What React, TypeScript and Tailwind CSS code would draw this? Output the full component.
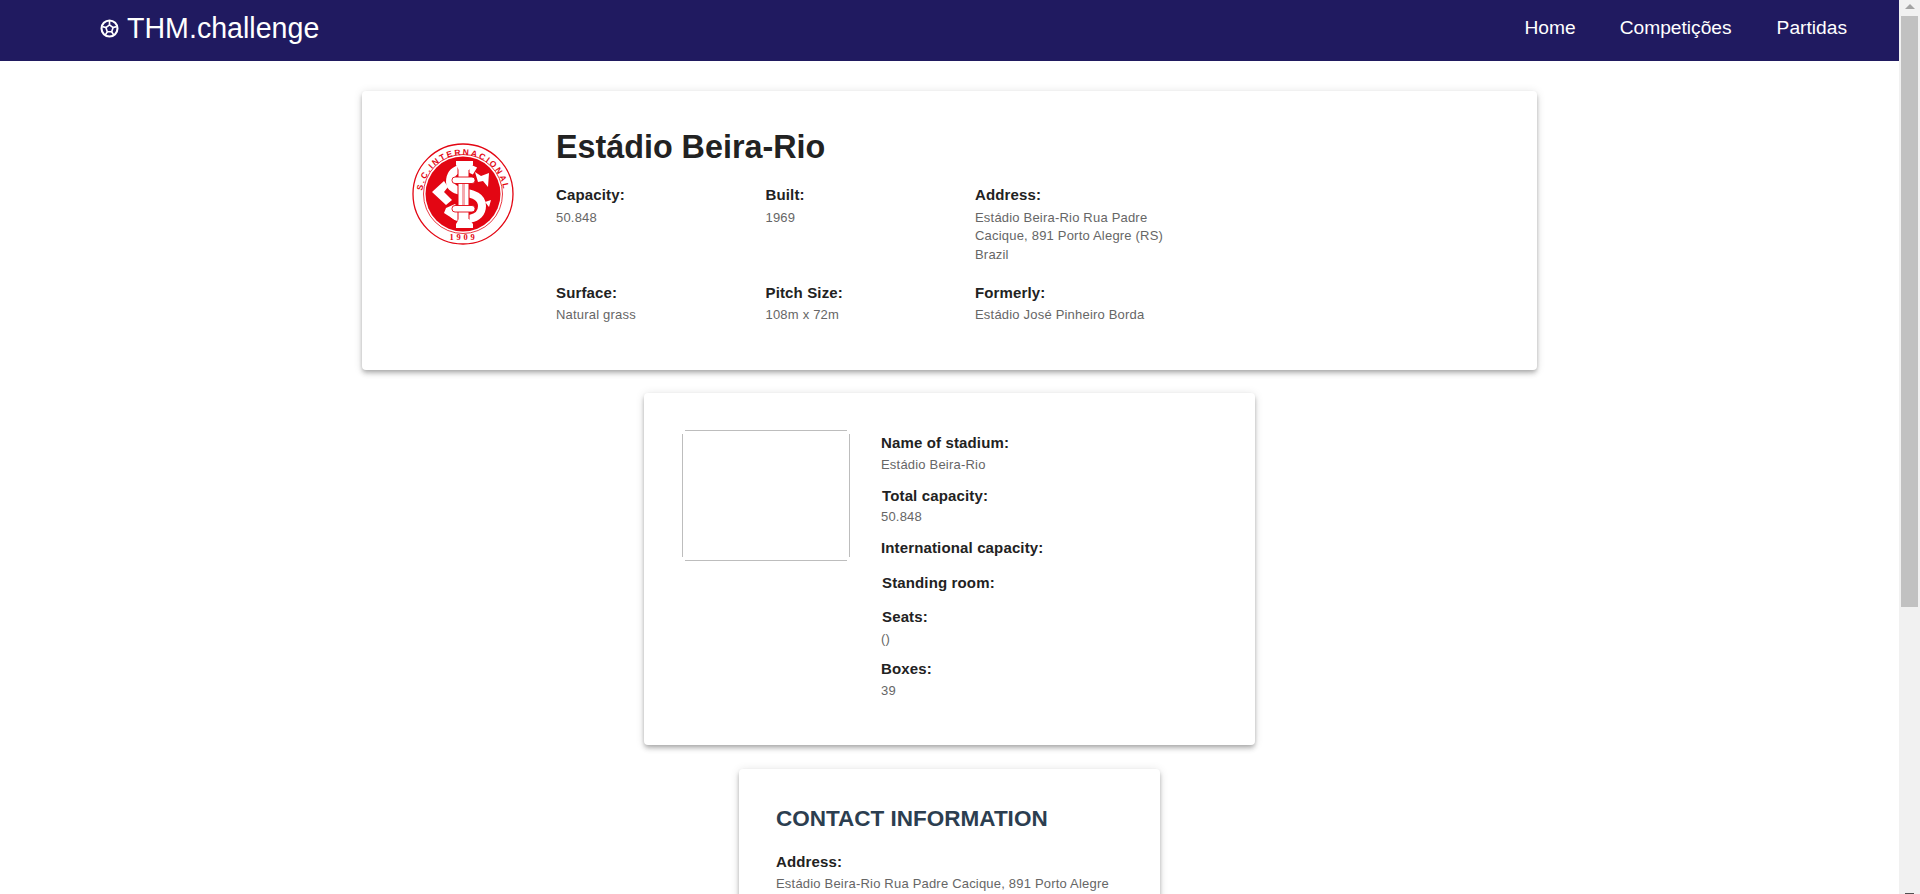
const FONT = "font-['Liberation_Sans',Arial,sans-serif]";

function Ball() {
  return (
    <svg width="19" height="19" viewBox="0 0 20 20" fill="none" stroke="white" strokeWidth="2.2" className="shrink-0">
      <circle cx="10" cy="10" r="8.4" />
      <path d="M10 6.2 L13.8 9 L12.3 13.4 L7.7 13.4 L6.2 9 Z" strokeWidth="1.7" />
      <path d="M10 2v4M2.5 8l3.7 1M17.5 8l-3.7 1M5.5 17l2.2-3.6M14.5 17l-2.2-3.6" strokeWidth="1.7" />
    </svg>
  );
}

function Crest() {
  const s = "M64 29 C56 24 39 25 39 40 C39 54 71 46 71 64 C71 79 50 80 42 72";
  return (
    <svg width="104" height="104" viewBox="0 0 104 104" className="shrink-0">
      <defs>
        <path id="topArc" d="M11 54 A41 41 0 1 1 93 54" />
      </defs>
      <circle cx="52" cy="52" r="50" fill="white" stroke="#e30613" strokeWidth="1.3" />
      <circle cx="52" cy="52" r="39.5" fill="none" stroke="#e30613" strokeWidth="0.8" />
      <circle cx="52" cy="52" r="37.5" fill="#e30613" />
      <text fontFamily="Liberation Sans" fontWeight="700" fontSize="8.4" fill="#e30613" letterSpacing="1.9">
        <textPath href="#topArc" startOffset="50%" textAnchor="middle">S.C.INTERNACIONAL</textPath>
      </text>
      <text x="52.5" y="98" textAnchor="middle" fontFamily="Liberation Serif" fontWeight="700" fontSize="8.5" fill="#e30613" letterSpacing="2.8">1909</text>
      <path d={s} fill="none" stroke="#e30613" strokeWidth="10" />
      <path d={s} fill="none" stroke="white" strokeWidth="8" />
      <path d="M21 50 L33 39 L37 45 L33 50 L41 58 L35 63 Z" fill="white" />
      <path d="M64 30 L70 34 L78 31 L77 45 L72 39 L67 40 Z" fill="white" />
      <path d="M74 60 L80 58 L78 65 Z" fill="white" />
      <path d="M35 66 L44 62 L50 70 L44 78 L33 71 Z" fill="white" />
      <rect x="47" y="24" width="11" height="56" fill="white" stroke="#e30613" strokeWidth="1" />
      <rect x="51" y="40" width="3" height="24" fill="#e30613" opacity="0.35" />
      <path d="M45 19 H62 V23 L58 28 H48 L45 23 Z" fill="white" />
      <path d="M45 86 H62 V82 L58 77 H48 L45 82 Z" fill="white" />
      <rect x="41" y="35" width="23" height="6.5" rx="3" fill="white" stroke="#e30613" strokeWidth="0.9" />
      <rect x="41" y="63.5" width="23" height="6.5" rx="3" fill="white" stroke="#e30613" strokeWidth="0.9" />
    </svg>
  );
}

function Field({
  label,
  value,
  className = "",
  valueClass = "mt-[3px]",
}: {
  label: string;
  value?: string;
  className?: string;
  valueClass?: string;
}) {
  return (
    <div className={className}>
      <div className="text-[15px] leading-[20px] font-bold tracking-[0.14px] text-[#222222]">{label}</div>
      {value ? <div className={`${valueClass} text-[13px] leading-[18.4px] tracking-[0.2px] text-[#666666]`}>{value}</div> : null}
    </div>
  );
}

const cardClass =
  "bg-white rounded-[4px] shadow-[0_2px_4px_-1px_rgba(0,0,0,0.2),0_4px_5px_0_rgba(0,0,0,0.14),0_1px_10px_0_rgba(0,0,0,0.12)]";

export default function App() {
  return (
    <div className={`flex h-[894px] w-full overflow-hidden bg-white ${FONT}`}>
      <div className="flex min-w-0 flex-1 flex-col overflow-hidden">
        <header className="flex h-[61px] shrink-0 items-center justify-between bg-[#201a60] pb-[5px] pl-[100px] pr-[52px] text-white">
          <div className="flex items-center gap-[8px]">
            <Ball />
            <span className="text-[28.6px] leading-[32px]">THM.challenge</span>
          </div>
          <nav className="mb-[1px] flex gap-[45px] text-[19.2px] leading-[24px]">
            <span className="-mr-[1px]">Home</span>
            <span>Competições</span>
            <span>Partidas</span>
          </nav>
        </header>

        <main className="flex flex-col items-center pt-[30px]">
          <section className={`${cardClass} flex h-[279px] w-[1175px] shrink-0 pl-[49px] pt-[51px]`}>
            <Crest />
            <div className="ml-[41px] -mt-[15px]">
              <h1 className="text-[32.3px] leading-[40px] font-bold text-[#222222]">Estádio Beira-Rio</h1>
              <div className="mt-[18px] grid grid-cols-[209.5px_209.5px_200px] gap-y-[19px]">
                <Field label="Capacity:" value="50.848" valueClass="mt-[4px]" />
                <Field label="Built:" value="1969" valueClass="mt-[4px]" />
                <Field label="Address:" value="Estádio Beira-Rio Rua Padre Cacique, 891 Porto Alegre (RS) Brazil" valueClass="mt-[4px]" />
                <Field label="Surface:" value="Natural grass" />
                <Field label="Pitch Size:" value="108m x 72m" />
                <Field label="Formerly:" value="Estádio José Pinheiro Borda" />
              </div>
            </div>
          </section>

          <section className={`${cardClass} mt-[23px] flex h-[352px] w-[611px] shrink-0 pl-[38px] pt-[37px]`}>
            <div className="flex h-[131px] w-[168px] shrink-0 flex-col">
              <div className="mx-[3px] h-px bg-[#bdbdbd]" />
              <div className="flex flex-1 justify-between py-[3px]">
                <div className="w-px bg-[#bdbdbd]" />
                <div className="w-px bg-[#bdbdbd]" />
              </div>
              <div className="mx-[3px] h-px bg-[#bdbdbd]" />
            </div>
            <div className="ml-[31px] flex flex-col gap-[11px] pt-[3px]">
              <Field label="Name of stadium:" value="Estádio Beira-Rio" />
              <Field label="Total capacity:" value="50.848" className="ml-[1px] mt-[1px]" valueClass="mt-[2px] -ml-[1px]" />
              <Field label="International capacity:" />
              <Field label="Standing room:" className="ml-[1px] mt-[4px]" />
              <Field label="Seats:" value="()" className="ml-[1px] mt-[3px]" valueClass="mt-[3px] -ml-[1px]" />
              <Field label="Boxes:" value="39" />
            </div>
          </section>

          <section className={`${cardClass} mt-[24px] w-[421px] shrink-0 px-[37px] pt-[36px] pb-[24px]`}>
            <h2 className="text-[22.5px] leading-[28px] font-bold text-[#2c3e50]">CONTACT INFORMATION</h2>
            <Field label="Address:" value="Estádio Beira-Rio Rua Padre Cacique, 891 Porto Alegre (RS) Brazil" className="mt-[19px]" />
          </section>
        </main>
      </div>

      <aside className="flex h-full w-[21px] shrink-0 flex-col bg-[#f1f1f1]">
        <div className="flex h-[16px] justify-center pt-[4px]">
          <div className="h-0 w-0 border-x-[5px] border-b-[5px] border-x-transparent border-b-[#a3a3a3]" />
        </div>
        <div className="ml-[2px] h-[591px] w-[17px] bg-[#c1c1c1]" />
        <div className="flex-1" />
        <div className="mx-auto h-px w-[9px] bg-[#505050]" />
      </aside>
    </div>
  );
}
